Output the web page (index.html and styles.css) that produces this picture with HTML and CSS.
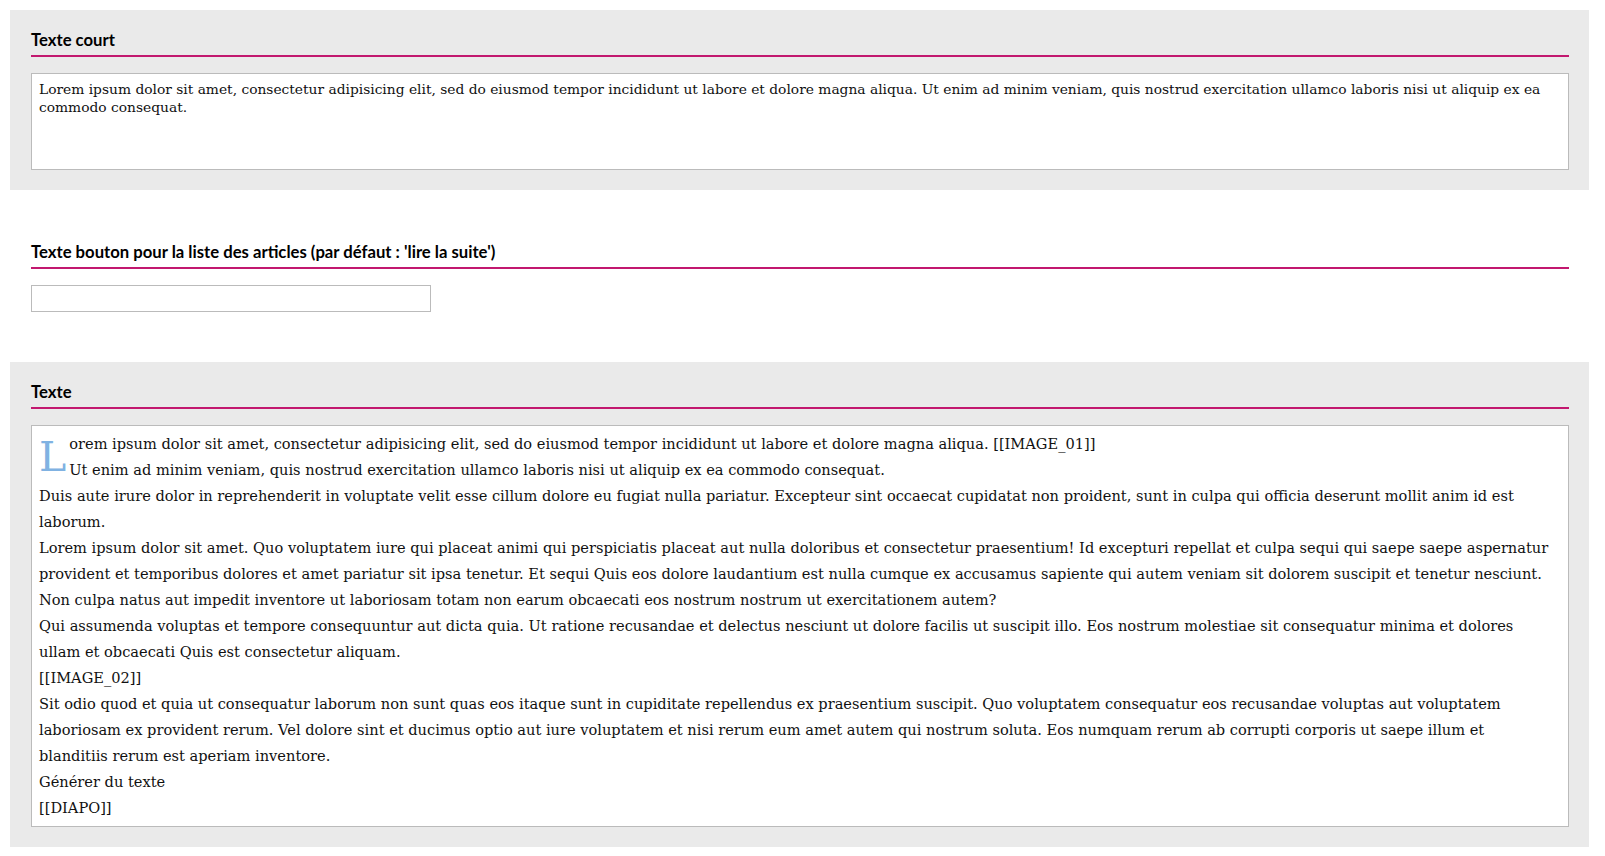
FILE: index.html
```html
<!DOCTYPE html>
<html lang="fr">
<head>
    <meta charset="UTF-8">
    <meta name="viewport" content="width=device-width, initial-scale=1.0">
    <title>Édition article</title>
    <link rel="stylesheet" href="styles.css">
</head>
<body>

<div class="page">
    <div class="field field-grey">
        <label class="field-title" for="texteCourt">Texte court</label>
        <textarea id="texteCourt" class="field-area">Lorem ipsum dolor sit amet, consectetur adipisicing elit, sed do eiusmod tempor incididunt ut labore et dolore magna aliqua. Ut enim ad minim veniam, quis nostrud exercitation ullamco laboris nisi ut aliquip ex ea commodo consequat.</textarea>
    </div>

    <div class="field field-plain">
        <label class="field-title" for="texteBouton">Texte bouton pour la liste des articles (par défaut : 'lire la suite')</label>
        <input type="text" id="texteBouton" class="field-input">
    </div>

    <div class="field field-grey">
        <div class="field-title">Texte</div>
        <div class="editor" contenteditable="true">
            <p class="first"><span class="dropcap">L</span>orem ipsum dolor sit amet, consectetur adipisicing elit, sed do eiusmod tempor incididunt ut labore et dolore magna aliqua. [[IMAGE_01]]<br>Ut enim ad minim veniam, quis nostrud exercitation ullamco laboris nisi ut aliquip ex ea commodo consequat.</p>
            <p>Duis aute irure dolor in reprehenderit in voluptate velit esse cillum dolore eu fugiat nulla pariatur. Excepteur sint occaecat cupidatat non proident, sunt in culpa qui officia deserunt mollit anim id est laborum.</p>
            <p>Lorem ipsum dolor sit amet. Quo voluptatem iure qui placeat animi qui perspiciatis placeat aut nulla doloribus et consectetur praesentium! Id excepturi repellat et culpa sequi qui saepe saepe aspernatur provident et temporibus dolores et amet pariatur sit ipsa tenetur. Et sequi Quis eos dolore laudantium est nulla cumque ex accusamus sapiente qui autem veniam sit dolorem suscipit et tenetur nesciunt.</p>
            <p>Non culpa natus aut impedit inventore ut laboriosam totam non earum obcaecati eos nostrum nostrum ut exercitationem autem?</p>
            <p>Qui assumenda voluptas et tempore consequuntur aut dicta quia. Ut ratione recusandae et delectus nesciunt ut dolore facilis ut suscipit illo. Eos nostrum molestiae sit consequatur minima et dolores ullam et obcaecati Quis est consectetur aliquam.</p>
            <p>[[IMAGE_02]]</p>
            <p>Sit odio quod et quia ut consequatur laborum non sunt quas eos itaque sunt in cupiditate repellendus ex praesentium suscipit. Quo voluptatem consequatur eos recusandae voluptas aut voluptatem laboriosam ex provident rerum. Vel dolore sint et ducimus optio aut iure voluptatem et nisi rerum eum amet autem qui nostrum soluta. Eos numquam rerum ab corrupti corporis ut saepe illum et blanditiis rerum est aperiam inventore.</p>
            <p>Générer du texte</p>
            <p>[[DIAPO]]</p>
        </div>
    </div>
</div>

</body>
</html>
```

FILE: styles.css
```css
body {
    margin: 0;
    background-color: #fff;
    font-family: "Lato", "Open Sans", sans-serif;
    color: #000;
}
.page {
    padding: 10px 16px 10px 10px;
}
.field {
    padding: 20px 20px 20px 21px;
}
.field-grey {
    background-color: #eaeaea;
}
.field-plain {
    margin: 32px 0 30px;
}
.field-title {
    display: block;
    height: 25px;
    font-size: 16.7px;
    font-weight: bold;
    line-height: 20px;
    border-bottom: 2px solid #c2186f;
    margin-bottom: 16px;
}
.field-area {
    display: block;
    box-sizing: border-box;
    width: 100%;
    height: 97px;
    margin: 0;
    padding: 6px 7px;
    border: 1px solid #bbb;
    background: #fff;
    font-family: "DejaVu Serif", serif;
    font-size: 13.8px;
    line-height: 18px;
    color: #111;
    resize: none;
}
.field-input {
    display: block;
    box-sizing: border-box;
    width: 400px;
    height: 27px;
    margin: 0;
    border: 1px solid #bbb;
    background: #fff;
}
.editor {
    border: 1px solid #bbb;
    background: #fff;
    padding: 5px 15px 5px 7px;
    font-family: "DejaVu Serif", serif;
    font-size: 14.6px;
    line-height: 26px;
    color: #111;
}
.editor p {
    margin: 0;
}
.dropcap {
    float: left;
    font-size: 41px;
    line-height: 36px;
    margin: 8px 3px 0 0;
    color: #80b2e2;
}
```
